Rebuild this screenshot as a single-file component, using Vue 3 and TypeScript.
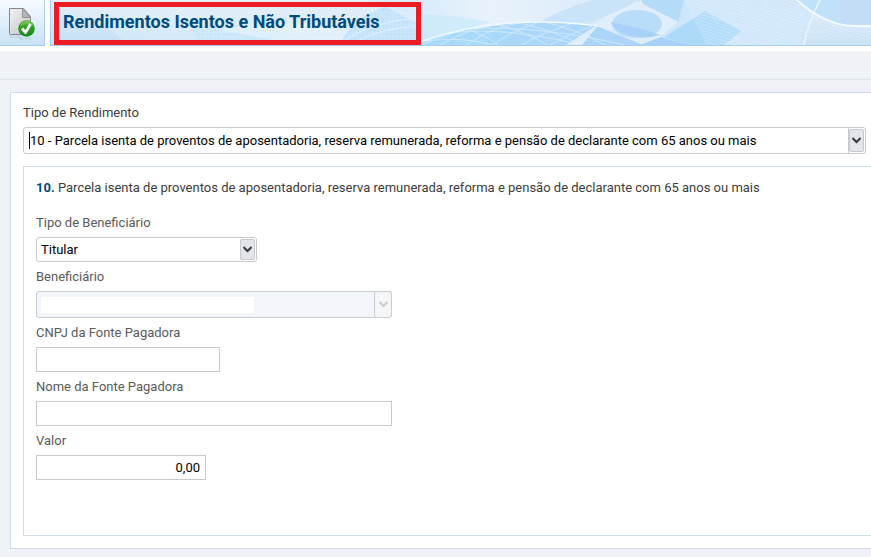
<script setup lang="ts">
import { ref } from 'vue'

const incomeDescription =
  'Parcela isenta de proventos de aposentadoria, reserva remunerada, reforma e pensão de declarante com 65 anos ou mais'

const incomeType = ref('10')
const beneficiaryType = ref('titular')
const beneficiary = ref('')
const cnpj = ref('')
const payerName = ref('')
const amount = ref('0,00')
</script>

<template>
  <div class="app">
    <header class="header">
      <button class="tool" type="button" aria-label="Confirmar">
        <svg width="28" height="36" viewBox="0 0 28 36" aria-hidden="true">
          <defs>
            <linearGradient id="paper" x1="0" y1="0" x2="1" y2="1">
              <stop offset="0" stop-color="#f4f4f4" />
              <stop offset="1" stop-color="#bfc0c1" />
            </linearGradient>
            <linearGradient id="green" x1="0" y1="0" x2="0" y2="1">
              <stop offset="0" stop-color="#5cb531" />
              <stop offset="0.5" stop-color="#269b20" />
              <stop offset="1" stop-color="#178a1c" />
            </linearGradient>
            <linearGradient id="reflection" x1="0" y1="0" x2="0" y2="1">
              <stop offset="0" stop-color="#8dbd9d" stop-opacity="0.6" />
              <stop offset="1" stop-color="#b9d8ee" stop-opacity="0" />
            </linearGradient>
          </defs>
          <path d="M2 30h11l2 3H2z" fill="#c5d2df" opacity="0.6" />
          <path d="M11 32q7 2 14 0l-2 4H13z" fill="url(#reflection)" />
          <path
            d="M2.5 3.500h14l7 8V28.500q0 1-1 1h-19q-1 0-1-1z"
            fill="url(#paper)"
            stroke="#858789"
          />
          <path d="M15.500 3.500l8 9h-8z" fill="#b5b7b9" stroke="#858789" stroke-width="0.8" />
          <circle cx="19.500" cy="23.500" r="8.300" fill="url(#green)" />
          <path d="M13 21q2-5 7-5t6 4q-6-2-13 1z" fill="#96cf79" opacity="0.5" />
          <path
            d="M15 23.500l3.500 4 5-8.500"
            fill="none"
            stroke="#fff"
            stroke-width="2.700"
            stroke-linejoin="round"
          />
        </svg>
      </button>
      <div class="banner">
        <svg class="art" viewBox="51 0 820 45" preserveAspectRatio="xMinYMid slice" aria-hidden="true">
          <defs>
            <linearGradient id="sky" x1="0" y1="0" x2="0" y2="1">
              <stop offset="0" stop-color="#e4eef9" />
              <stop offset="1" stop-color="#c4dff6" />
            </linearGradient>
            <linearGradient id="beam" x1="0" y1="0" x2="0" y2="1">
              <stop offset="0" stop-color="#e4eff9" />
              <stop offset="1" stop-color="#cfe7f9" />
            </linearGradient>
            <linearGradient id="glow" x1="0" y1="0" x2="1" y2="0">
              <stop offset="0" stop-color="#d9ecfa" />
              <stop offset="0.4" stop-color="#e8f2fb" />
              <stop offset="1" stop-color="#dcecfa" />
            </linearGradient>
            <linearGradient id="globe" x1="0" y1="0" x2="1" y2="0">
              <stop offset="0" stop-color="#a9dbfb" />
              <stop offset="1" stop-color="#add3f8" />
            </linearGradient>
            <pattern id="mesh" width="4" height="4" patternUnits="userSpaceOnUse">
              <path d="M0 0.500h4M0.500 0v4" stroke="#fff" stroke-width="0.500" opacity="0.200" />
            </pattern>
            <pattern
              id="weave"
              width="4"
              height="3"
              patternUnits="userSpaceOnUse"
              patternTransform="rotate(18)"
            >
              <path d="M0 1h4" stroke="#f6fbff" stroke-width="0.900" opacity="0.450" />
            </pattern>
            <clipPath id="dome">
              <path d="M420 45V42Q480 22 545 22Q610 23 690 45z" />
            </clipPath>
          </defs>
          <path d="M51 0h820v45H51z" fill="url(#sky)" />
          <path d="M78 0h342v45H128Q104 22 84 13z" fill="url(#beam)" />
          <path d="M190 27Q270 20 320 45H200z" fill="#c6e5fb" opacity="0.700" />
          <path d="M220 30q60-14 110-2 25 6 40-2l-26 19H300z" fill="#e6f2fc" opacity="0.700" />
          <path d="M340 45Q352 14 400 2L421 0V45z" fill="#c3e3fa" />
          <path d="M372 0h49v25z" fill="#d9ecfb" />
          <path d="M345 40q30-20 76-22M350 45q30-18 71-19" fill="none" stroke="#e0f1fd" />
          <path d="M128 10h292v35H150z" fill="url(#mesh)" />
          <path d="M421 0h170L490 45h-69z" fill="url(#glow)" />
          <path d="M421 14q40 2 70 8l-70 23z" fill="#c9e9fb" opacity="0.700" />
          <path d="M592 0Q560 10 540 22h50L640 2V0z" fill="#c9e3f8" />
          <path d="M420 42Q480 21 545 22Q610 23 690 45H420z" fill="url(#globe)" />
          <g clip-path="url(#dome)" fill="none" stroke="#dff1fd" stroke-width="1" opacity="0.650">
            <path d="M422 45q34-16 69-21M440 45q30-18 70-22M466 45q24-17 56-23M493 45q20-15 44-22M522 45q20-12 52-22M550 45q15-9 42-19" />
            <path d="M457 27q25 5 41 18M486 22q32 6 62 23M510 21q38 7 72 24M540 21q34 7 65 24M430 36q65-13 150 9M445 31q75-10 180 14M423 41q40-5 70 4" />
          </g>
          <path d="M420 42Q480 21 545 22Q610 23 690 45" fill="none" stroke="#f1f9ff" stroke-width="1.500" />
          <path d="M600 23l-34 22h16z" fill="#e5f1fc" opacity="0.850" />
          <path d="M592 24L637 1l41 21-27 23h-8z" fill="#e0eefb" opacity="0.900" />
          <ellipse cx="637" cy="24" rx="25" ry="14" fill="#b9dcf8" />
          <path d="M611 22q34 7 49 13-20 6-40-3-7-4-9-10z" fill="#a8d1f9" />
          <path d="M641 0h43l-3 23-38-19z" fill="#b4dcf8" />
          <path d="M684 0h115l16 20-12 25H650l28-22z" fill="#cee6fa" />
          <path d="M664 37l41-26 36 20-17 14h-38z" fill="#addaf9" />
          <path d="M640 45l21-8 26 8z" fill="#a7d1fa" />
          <path d="M684 0h187v45H706z" fill="url(#weave)" />
          <path d="M797 0q30 27 60 26h14V0z" fill="#bfe1fa" />
          <path d="M840 0h31v26h-14q-12-1-17-4z" fill="#c3dcf6" />
          <path d="M797 0q30 27 60 26h14" fill="none" stroke="#f2faff" stroke-width="2" />
          <path d="M820 0q-12 23-16 45" fill="none" stroke="#e9f6ff" stroke-width="1.500" />
          <g fill="none" stroke="#edf7ff" stroke-width="0.700" opacity="0.300">
            <path d="M685 2q60 13 119 30M695 0q60 15 110 25M720 0q50 14 90 17M700 14q50 15 100 24M705 0q8 30 45 45M738 0q8 30 45 45M766 0q8 30 38 39M806 33q35-6 65-1M805 39q30-6 66-1" />
          </g>
        </svg>
        <h1 class="title">Rendimentos Isentos e Não Tributáveis</h1>
      </div>
    </header>

    <div class="strip"></div>

    <main class="panel">
      <div class="field">
        <label for="income-type">Tipo de Rendimento</label>
        <div class="combo wide">
          <select id="income-type" v-model="incomeType">
            <option value="10">10 - {{ incomeDescription }}</option>
          </select>
          <span class="caret" aria-hidden="true"></span>
          <span class="arrow" aria-hidden="true">
            <svg width="9" height="7" viewBox="0 0 9 7"><path d="M0.500 1l4 4 4-4" /></svg>
          </span>
        </div>
      </div>

      <form class="details" @submit.prevent>
        <h2 class="caption"><strong>10.</strong> {{ incomeDescription }}</h2>

        <div class="field">
          <label for="beneficiary-type">Tipo de Beneficiário</label>
          <div class="combo small">
            <select id="beneficiary-type" v-model="beneficiaryType">
              <option value="titular">Titular</option>
            </select>
            <span class="arrow" aria-hidden="true">
              <svg width="9" height="7" viewBox="0 0 9 7"><path d="M0.500 1l4 4 4-4" /></svg>
            </span>
          </div>
        </div>

        <div class="field">
          <label for="beneficiary">Beneficiário</label>
          <div class="combo large disabled">
            <select id="beneficiary" v-model="beneficiary" disabled>
              <option value=""></option>
            </select>
            <span class="blank" aria-hidden="true"></span>
            <span class="arrow" aria-hidden="true">
              <svg width="9" height="7" viewBox="0 0 9 7"><path d="M0.500 1l4 4 4-4" /></svg>
            </span>
          </div>
        </div>

        <div class="field">
          <label for="cnpj">CNPJ da Fonte Pagadora</label>
          <input id="cnpj" v-model="cnpj" class="cnpj" type="text" />
        </div>

        <div class="field">
          <label for="payer-name">Nome da Fonte Pagadora</label>
          <input id="payer-name" v-model="payerName" class="name" type="text" />
        </div>

        <div class="field">
          <label for="amount">Valor</label>
          <input id="amount" v-model="amount" class="amount" type="text" inputmode="decimal" />
        </div>
      </form>
    </main>
  </div>
</template>

<style>
body {
  margin: 0;
  background: #eff3f8;
}
</style>

<style scoped>
.app {
  box-sizing: border-box;
  min-height: 100vh;
  background: #eff3f8;
  color: #3c3c3c;
  font-family: Roboto, 'Liberation Sans', sans-serif;
  font-size: 13px;
  line-height: 16px;
}

.app *,
.app *::before {
  box-sizing: border-box;
}

.header {
  display: flex;
  gap: 5px;
  height: 51px;
  padding-bottom: 5px;
  background: #fff;
}

.tool {
  flex: none;
  display: flex;
  align-items: flex-start;
  width: 45px;
  padding: 5px 0 0 7px;
  border: 0;
  border-right: 1px solid #a9ccef;
  border-bottom: 1px solid #a9ccef;
  background: linear-gradient(#f5faff, #c9e2f7);
}

.banner {
  position: relative;
  flex: 1;
  min-width: 0;
  overflow: hidden;
  padding: 2px 0 0 3px;
  border-left: 1px solid #a9ccef;
  border-bottom: 1px solid #a9ccef;
}

.art {
  position: absolute;
  inset: 0;
  width: 100%;
  height: 100%;
}

.title {
  position: relative;
  width: fit-content;
  margin: 0;
  padding: 0 36px 3px 4px;
  border: 5px solid #ed1c24;
  color: #004b7d;
  font-size: 18px;
  font-weight: 700;
  line-height: 30px;
  white-space: nowrap;
}

.strip {
  height: 29px;
  border-bottom: 1px solid #dce3ea;
}

.panel {
  margin: 12px 0 8px 10px;
  padding: 12px 0 12px 12px;
  border: 1px solid #d0dce8;
  border-right: 0;
  background: #fff;
}

.field {
  display: flex;
  flex-direction: column;
  align-items: flex-start;
  gap: 6px;
}

.details {
  display: flex;
  flex-direction: column;
  gap: 7px;
  margin-top: 12px;
  padding: 13px 12px 55px;
  border: 1px solid #d0dce8;
  border-right: 0;
}

.details label {
  color: #5a5a5a;
}

.caption {
  margin: 0 0 12px;
  font-size: 13px;
  font-weight: 400;
}

.caption strong {
  color: #004b7d;
  font-weight: 700;
}

.combo {
  position: relative;
  height: 27px;
}

.wide {
  align-self: stretch;
  margin-right: 5px;
}

.small {
  width: 221px;
  height: 25px;
}

.large {
  width: 356px;
}

select {
  display: block;
  width: 100%;
  height: 100%;
  padding: 0 24px 0 4px;
  border: 1px solid #c9cacc;
  border-radius: 3px;
  background: #fff;
  color: #000;
  font: inherit;
  appearance: none;
}

.wide select {
  padding-left: 6px;
}

.disabled select {
  border-color: #c8cdd3;
  background: #f2f6fa;
  opacity: 1;
}

.arrow {
  position: absolute;
  top: 2px;
  right: 2px;
  bottom: 2px;
  display: flex;
  align-items: center;
  justify-content: center;
  width: 15px;
  border: 1px solid #c6c8cb;
  border-radius: 2px;
  background: #e3e5ea;
  pointer-events: none;
}

.arrow path {
  fill: none;
  stroke: #333b44;
  stroke-width: 2;
}

.wide .arrow::before {
  content: '';
  position: absolute;
  top: -2px;
  bottom: -2px;
  left: -2px;
  width: 1px;
  background: #c9cacc;
}

.disabled .arrow {
  top: 0;
  right: 0;
  bottom: 0;
  width: 18px;
  border-color: #c8cdd3;
  border-radius: 3px;
  background: #f5f6f8;
}

.disabled .arrow path {
  stroke: #cbced2;
}

.caret {
  position: absolute;
  top: 5px;
  bottom: 5px;
  left: 6px;
  width: 1px;
  background: #000;
}

.blank {
  position: absolute;
  top: 6px;
  bottom: 5px;
  left: 5px;
  width: 213px;
  background: #fff;
}

input {
  height: 25px;
  padding: 0 5px;
  border: 1px solid #c9cacc;
  border-radius: 0;
  background: #fff;
  color: #000;
  font: inherit;
}

.cnpj {
  width: 184px;
}

.name {
  width: 356px;
}

.amount {
  width: 170px;
  text-align: right;
}
</style>
